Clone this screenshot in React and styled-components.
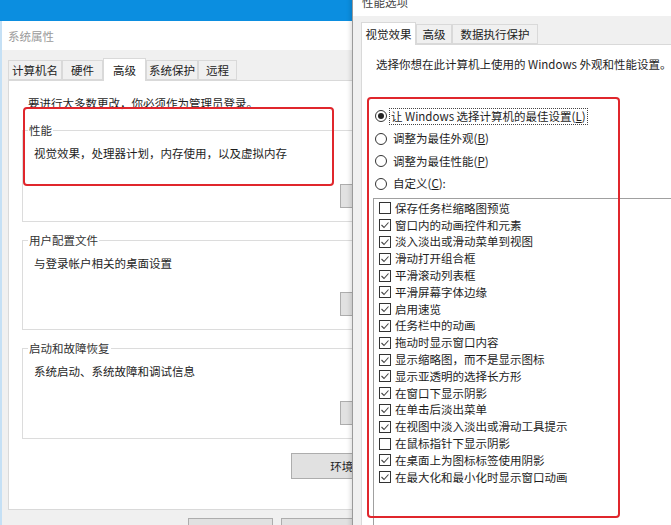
import React from 'react';
import styled, { createGlobalStyle } from 'styled-components';

const GlobalStyle = createGlobalStyle`
  html, body { margin: 0; padding: 0; }
  body {
    font-family: "Noto Sans CJK SC", "Noto Sans", sans-serif;
    font-size: 11.5px;
    color: #1e1e1e;
  }
`;

const Desktop = styled.div`
  position: relative;
  width: 671px;
  height: 525px;
  overflow: hidden;
  background: #0b8ee0;
`;

const SysWindow = styled.div`
  position: absolute;
  left: 0;
  top: 21px;
  width: 470px;
  height: 540px;
  box-sizing: border-box;
  background: #f0f0f0;
  border-left: 2px solid #c5e0f5;
  display: flex;
  flex-direction: column;
`;

const PerfWindow = styled.div`
  position: absolute;
  left: 352px;
  top: -13px;
  width: 340px;
  height: 560px;
  box-sizing: border-box;
  background: #f0f0f0;
  border-left: 1px solid #9a9a9a;
  box-shadow: -2px 0 4px rgba(0, 0, 0, 0.12);
  display: flex;
  flex-direction: column;
`;

const TitleBar = styled.div`
  flex-shrink: 0;
  height: ${p => p.h}px;
  background: #fff;
  display: flex;
  align-items: center;
  padding-left: ${p => p.pad}px;
  color: ${p => p.color};
  font-size: 11.5px;
`;

const Body = styled.div`
  padding: ${p => p.pad};
  display: flex;
  flex-direction: column;
`;

const TabRow = styled.div`
  display: flex;
  align-items: flex-end;
  height: 22px;
  position: relative;
  z-index: 1;
`;

const Tab = styled.div`
  box-sizing: border-box;
  width: ${p => p.w}px;
  height: ${p => (p.active ? 23 : 20)}px;
  margin-bottom: ${p => (p.active ? -1 : 0)}px;
  background: ${p => (p.active ? '#fff' : '#f0f0f0')};
  border: 1px solid #d9d9d9;
  border-bottom: ${p => (p.active ? 'none' : '1px solid #d9d9d9')};
  display: flex;
  align-items: center;
  justify-content: center;
  white-space: nowrap;
  color: #222;
`;

const Panel = styled.div`
  position: relative;
  box-sizing: border-box;
  height: ${p => p.h}px;
  background: #fff;
  border: 1px solid #d9d9d9;
  padding: ${p => p.pad};
  display: flex;
  flex-direction: column;
`;

const Note = styled.div`
  margin-left: 6px;
  line-height: 16px;
  white-space: nowrap;
`;

const Group = styled.div`
  position: relative;
  box-sizing: border-box;
  width: 402px;
  height: ${p => p.h}px;
  margin-top: ${p => p.mt}px;
  border: 1px solid #dcdcdc;
  padding: 14px 8px 13px 11px;
  display: flex;
  flex-direction: column;
  justify-content: space-between;
`;

const GroupLabel = styled.span`
  position: absolute;
  top: -9px;
  left: 5px;
  padding: 0 1px;
  background: #fff;
  line-height: 16px;
  color: #333;
`;

const GroupText = styled.div`
  line-height: 16px;
  white-space: nowrap;
`;

const Button = styled.div`
  box-sizing: border-box;
  width: ${p => p.w}px;
  height: ${p => p.h}px;
  margin-left: ${p => p.ml || 0}px;
  margin-top: ${p => p.mt || 0}px;
  align-self: ${p => p.align || 'auto'};
  background: #e1e1e1;
  border: 1px solid #adadad;
  display: flex;
  align-items: center;
  justify-content: center;
  white-space: nowrap;
  color: #222;
`;

const ButtonRow = styled.div`
  display: flex;
  gap: 8px;
  margin: 8px 0 0 180px;
`;

const Mark = styled.div`
  position: absolute;
  left: ${p => p.x}px;
  top: ${p => p.y}px;
  width: ${p => p.w}px;
  height: ${p => p.h}px;
  box-sizing: border-box;
  border: 2px solid #e0262c;
  border-radius: 4px;
  pointer-events: none;
`;

const Intro = styled.div`
  margin-left: 1px;
  line-height: 16px;
  white-space: nowrap;
`;

const RadioList = styled.div`
  margin-top: 33px;
  display: flex;
  flex-direction: column;
`;

const RadioRow = styled.div`
  height: 22.5px;
  display: flex;
  align-items: center;
  gap: 4px;
  white-space: nowrap;
`;

const RadioDot = styled.span`
  box-sizing: border-box;
  width: 12px;
  height: 12px;
  border-radius: 50%;
  border: 1px solid #333;
  background: #fff;
  display: flex;
  align-items: center;
  justify-content: center;
  &::after {
    content: '';
    width: 6px;
    height: 6px;
    border-radius: 50%;
    background: ${p => (p.on ? '#222' : 'transparent')};
  }
`;

const RadioText = styled.span`
  line-height: 15px;
  padding: 0 1px;
  margin-left: ${p => (p.focus ? -2 : 0)}px;
  border: 1px dotted ${p => (p.focus ? '#444' : 'transparent')};
`;

const CheckList = styled.div`
  margin: 3px 0 0 -2px;
  width: 320px;
  height: 340px;
  box-sizing: border-box;
  border: 1px solid #a0a0a0;
  padding: 1px 0 0 5px;
  display: flex;
  flex-direction: column;
`;

const CheckRow = styled.div`
  height: 16.8px;
  line-height: 15px;
  display: flex;
  align-items: center;
  gap: 4px;
  white-space: nowrap;
`;

const Box = styled.span`
  box-sizing: border-box;
  width: 12px;
  height: 12px;
  border: 1px solid #333;
  background: #fff;
  display: flex;
  align-items: center;
  justify-content: center;
`;

function CheckBox({ on }) {
  return (
    <Box>
      {on && (
        <svg width="10" height="10" viewBox="0 0 10 10">
          <polyline points="1.5,5 4,7.5 8.5,2.5" fill="none" stroke="#444" strokeWidth="1.1" />
        </svg>
      )}
    </Box>
  );
}

const effects = [
  ['保存任务栏缩略图预览', false],
  ['窗口内的动画控件和元素', true],
  ['淡入淡出或滑动菜单到视图', true],
  ['滑动打开组合框', true],
  ['平滑滚动列表框', true],
  ['平滑屏幕字体边缘', true],
  ['启用速览', true],
  ['任务栏中的动画', true],
  ['拖动时显示窗口内容', true],
  ['显示缩略图，而不是显示图标', true],
  ['显示亚透明的选择长方形', true],
  ['在窗口下显示阴影', true],
  ['在单击后淡出菜单', true],
  ['在视图中淡入淡出或滑动工具提示', true],
  ['在鼠标指针下显示阴影', false],
  ['在桌面上为图标标签使用阴影', true],
  ['在最大化和最小化时显示窗口动画', true],
];

const groups = [
  { label: '性能', text: '视觉效果，处理器计划，内存使用，以及虚拟内存', h: 92, mt: 19 },
  { label: '用户配置文件', text: '与登录帐户相关的桌面设置', h: 90, mt: 18 },
  { label: '启动和故障恢复', text: '系统启动、系统故障和调试信息', h: 91, mt: 18 },
];

export default function App() {
  return (
    <>
      <GlobalStyle />
      <Desktop>
        <SysWindow>
          <TitleBar h={29} pad={6} color="#9a9a9a">系统属性</TitleBar>
          <Body pad="8px 0 0 6px">
            <TabRow>
              <Tab w={54}>计算机名</Tab>
              <Tab w={41}>硬件</Tab>
              <Tab w={43} active>高级</Tab>
              <Tab w={52}>系统保护</Tab>
              <Tab w={39}>远程</Tab>
            </TabRow>
            <Panel h={430} pad="14px 0 0 13px">
              <Note>要进行大多数更改，你必须作为管理员登录。</Note>
              {groups.map(g => (
                <Group key={g.label} h={g.h} mt={g.mt}>
                  <GroupLabel>{g.label}</GroupLabel>
                  <GroupText>{g.text}</GroupText>
                  <Button w={75} h={24} align="flex-end">设置(S)...</Button>
                </Group>
              ))}
              <Button w={150} h={26} ml={269} mt={14}>环境变量(N)...</Button>
              <Mark x={14} y={26} w={311} h={79} />
            </Panel>
            <ButtonRow>
              <Button w={85} h={23} />
              <Button w={85} h={23} />
            </ButtonRow>
          </Body>
        </SysWindow>

        <PerfWindow>
          <TitleBar h={29} pad={9} color="#444">性能选项</TitleBar>
          <Body pad="6px 0 0 8px">
            <TabRow>
              <Tab w={55} active>视觉效果</Tab>
              <Tab w={36}>高级</Tab>
              <Tab w={86}>数据执行保护</Tab>
            </TabRow>
            <Panel h={500} pad="11px 0 0 13px">
              <Intro>选择你想在此计算机上使用的 Windows 外观和性能设置。</Intro>
              <RadioList>
                <RadioRow>
                  <RadioDot on />
                  <RadioText focus>让 Windows 选择计算机的最佳设置(<u>L</u>)</RadioText>
                </RadioRow>
                <RadioRow>
                  <RadioDot />
                  <RadioText>调整为最佳外观(<u>B</u>)</RadioText>
                </RadioRow>
                <RadioRow>
                  <RadioDot />
                  <RadioText>调整为最佳性能(<u>P</u>)</RadioText>
                </RadioRow>
                <RadioRow>
                  <RadioDot />
                  <RadioText>自定义(<u>C</u>):</RadioText>
                </RadioRow>
              </RadioList>
              <CheckList>
                {effects.map(([label, on]) => (
                  <CheckRow key={label}>
                    <CheckBox on={on} />
                    <span>{label}</span>
                  </CheckRow>
                ))}
              </CheckList>
              <Mark x={5} y={52} w={253} h={421} />
            </Panel>
          </Body>
        </PerfWindow>
      </Desktop>
    </>
  );
}
